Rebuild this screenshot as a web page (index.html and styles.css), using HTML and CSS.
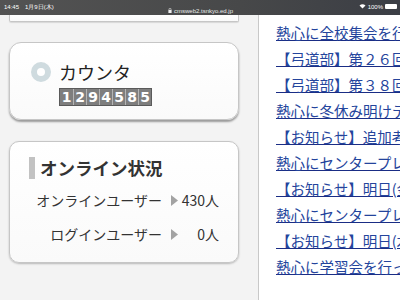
FILE: index.html
```html
<!DOCTYPE html>
<html lang="ja">
<head>
  <meta charset="UTF-8">
  <title>オンライン状況</title>
  <link rel="stylesheet" href="styles.css">
</head>
<body>
  <div class="statusbar">
    <span class="clock">14:45　1月9日(木)</span>
    <span class="url">
      <svg width="4" height="5" viewBox="0 0 4 5"><path d="M1 2 V1.2 A1 1 0 0 1 3 1.2 V2" fill="none" stroke="#eee" stroke-width="0.6"/><rect x="0.4" y="2" width="3.2" height="3" fill="#eee"/></svg>
      cmsweb2.tsnkyo.ed.jp
    </span>
    <span class="battery">
      <svg width="7" height="5" viewBox="0 0 7 5"><path d="M0.5 1.6 A4.5 4.5 0 0 1 6.5 1.6 L3.5 4.6 Z" fill="#fff"/></svg>
      100%
      <span class="cell"></span>
    </span>
  </div>

  <div class="page">
    <div class="side">
      <div class="card stub"></div>

      <div class="card counter">
        <div class="counter-head">
          <span class="ring"></span>
          <span class="counter-title">カウンタ</span>
        </div>
        <div class="digits">
          <span>1</span><span>2</span><span>9</span><span>4</span><span>5</span><span>8</span><span>5</span>
        </div>
      </div>

      <div class="card online">
        <h2 class="online-title">オンライン状況</h2>
        <div class="stats">
          <span class="stat-label">オンラインユーザー</span>
          <span class="arrow"><svg width="7" height="11" viewBox="0 0 7 11"><path d="M0 0 L7 5.5 L0 11 Z" fill="#a3a3a3"/></svg></span>
          <span class="stat-value">430人</span>
          <span class="stat-label">ログインユーザー</span>
          <span class="arrow"><svg width="7" height="11" viewBox="0 0 7 11"><path d="M0 0 L7 5.5 L0 11 Z" fill="#a3a3a3"/></svg></span>
          <span class="stat-value">0人</span>
        </div>
      </div>
    </div>

    <div class="news">
      <a href="#">熱心に全校集会を行いました</a>
      <a href="#">【弓道部】第２６回大会</a>
      <a href="#">【弓道部】第３８回大会</a>
      <a href="#">熱心に冬休み明けテスト</a>
      <a href="#">【お知らせ】追加考査</a>
      <a href="#">熱心にセンタープレテスト</a>
      <a href="#">【お知らせ】明日(金)</a>
      <a href="#">熱心にセンタープレテスト</a>
      <a href="#">【お知らせ】明日(木)</a>
      <a href="#">熱心に学習会を行っています</a>
    </div>
  </div>
</body>
</html>
```

FILE: styles.css
```css
body {
  margin: 0;
  width: 400px;
  height: 300px;
  overflow: hidden;
  background: #f3f3f3;
  font-family: "Noto Sans CJK JP", "Noto Sans", sans-serif;
  color: #333;
}

.statusbar {
  height: 15px;
  display: flex;
  justify-content: space-between;
  background: linear-gradient(to right, #535353, #474849 60%, #3b3e45);
  color: #fff;
  font-family: "Liberation Sans", sans-serif;
  font-size: 6px;
  line-height: 1;
  padding: 0 3px 0 4px;
  box-sizing: border-box;
}

.clock {
  padding-top: 4px;
  width: 120px;
}

.url {
  padding-top: 8px;
  color: #e8e8e8;
  display: flex;
  align-items: flex-start;
  gap: 2px;
}

.battery {
  width: 120px;
  padding-top: 4px;
  display: flex;
  justify-content: flex-end;
  gap: 2px;
}

.cell {
  width: 12px;
  height: 5px;
  background: #fff;
  border-radius: 1px;
}

.page {
  display: flex;
  height: 285px;
}

.side {
  width: 258px;
  flex-shrink: 0;
  padding-left: 9px;
  box-sizing: border-box;
}

.card {
  width: 230px;
  box-sizing: border-box;
  background: linear-gradient(#ffffff, #fafafa);
  border: 1px solid #c6c6c6;
  border-radius: 12px;
}

.stub {
  height: 7px;
  border-top: none;
  border-radius: 0 0 2px 2px;
  box-shadow: 0 1px 1px #d8d8d8;
}

.counter {
  margin-top: 20px;
  height: 78px;
  padding: 19px 0 0 21px;
  box-shadow: 0 2px 2px #9a9a9a;
}

.counter-head {
  display: flex;
  align-items: center;
  gap: 8px;
  height: 20px;
}

.ring {
  width: 20px;
  height: 20px;
  box-sizing: border-box;
  border: 6px solid #cfdbdf;
  border-radius: 50%;
  background: #fff;
}

.counter-title {
  font-size: 18px;
  color: #222;
  line-height: 20px;
}

.digits {
  display: inline-flex;
  margin: 6px 0 0 28px;
  border: 1px solid #5a5a5a;
}

.digits span {
  width: 12px;
  height: 16px;
  border-left: 1px solid #b5b5b5;
  background: #7e7e7e;
  color: #fff;
  font-family: "DejaVu Sans", sans-serif;
  font-weight: bold;
  font-size: 14px;
  line-height: 17px;
  text-align: center;
}

.digits span:first-child {
  border-left: none;
  width: 13px;
}

.online {
  margin-top: 21px;
  height: 122px;
  padding-top: 15px;
  border-radius: 10px;
  box-shadow: 0 1px 2px #b8b8b8;
}

.online-title {
  margin: 0 0 0 19px;
  padding-left: 5px;
  border-left: 6px solid #c2c2c2;
  font-size: 17.5px;
  font-weight: bold;
  line-height: 22px;
  color: #333;
}

.stats {
  display: grid;
  grid-template-columns: 152px 19px 38px;
  row-gap: 12px;
  margin-top: 10px;
  font-size: 14px;
  line-height: 22px;
  color: #333;
}

.stat-label {
  text-align: right;
}

.arrow {
  display: flex;
  align-items: center;
  padding-left: 9px;
}

.stat-value {
  text-align: right;
}

.news {
  flex: 1;
  height: 282px;
  background: #fff;
  border-left: 1px solid #c8c8c8;
  border-bottom: 1px solid #c8c8c8;
  padding: 5px 0 0 17px;
  overflow: hidden;
  display: flex;
  flex-direction: column;
}

.news a {
  font-size: 14.5px;
  line-height: 26px;
  white-space: nowrap;
  color: #24449c;
  text-decoration: underline;
  text-decoration-color: #1a2d85;
}
```
